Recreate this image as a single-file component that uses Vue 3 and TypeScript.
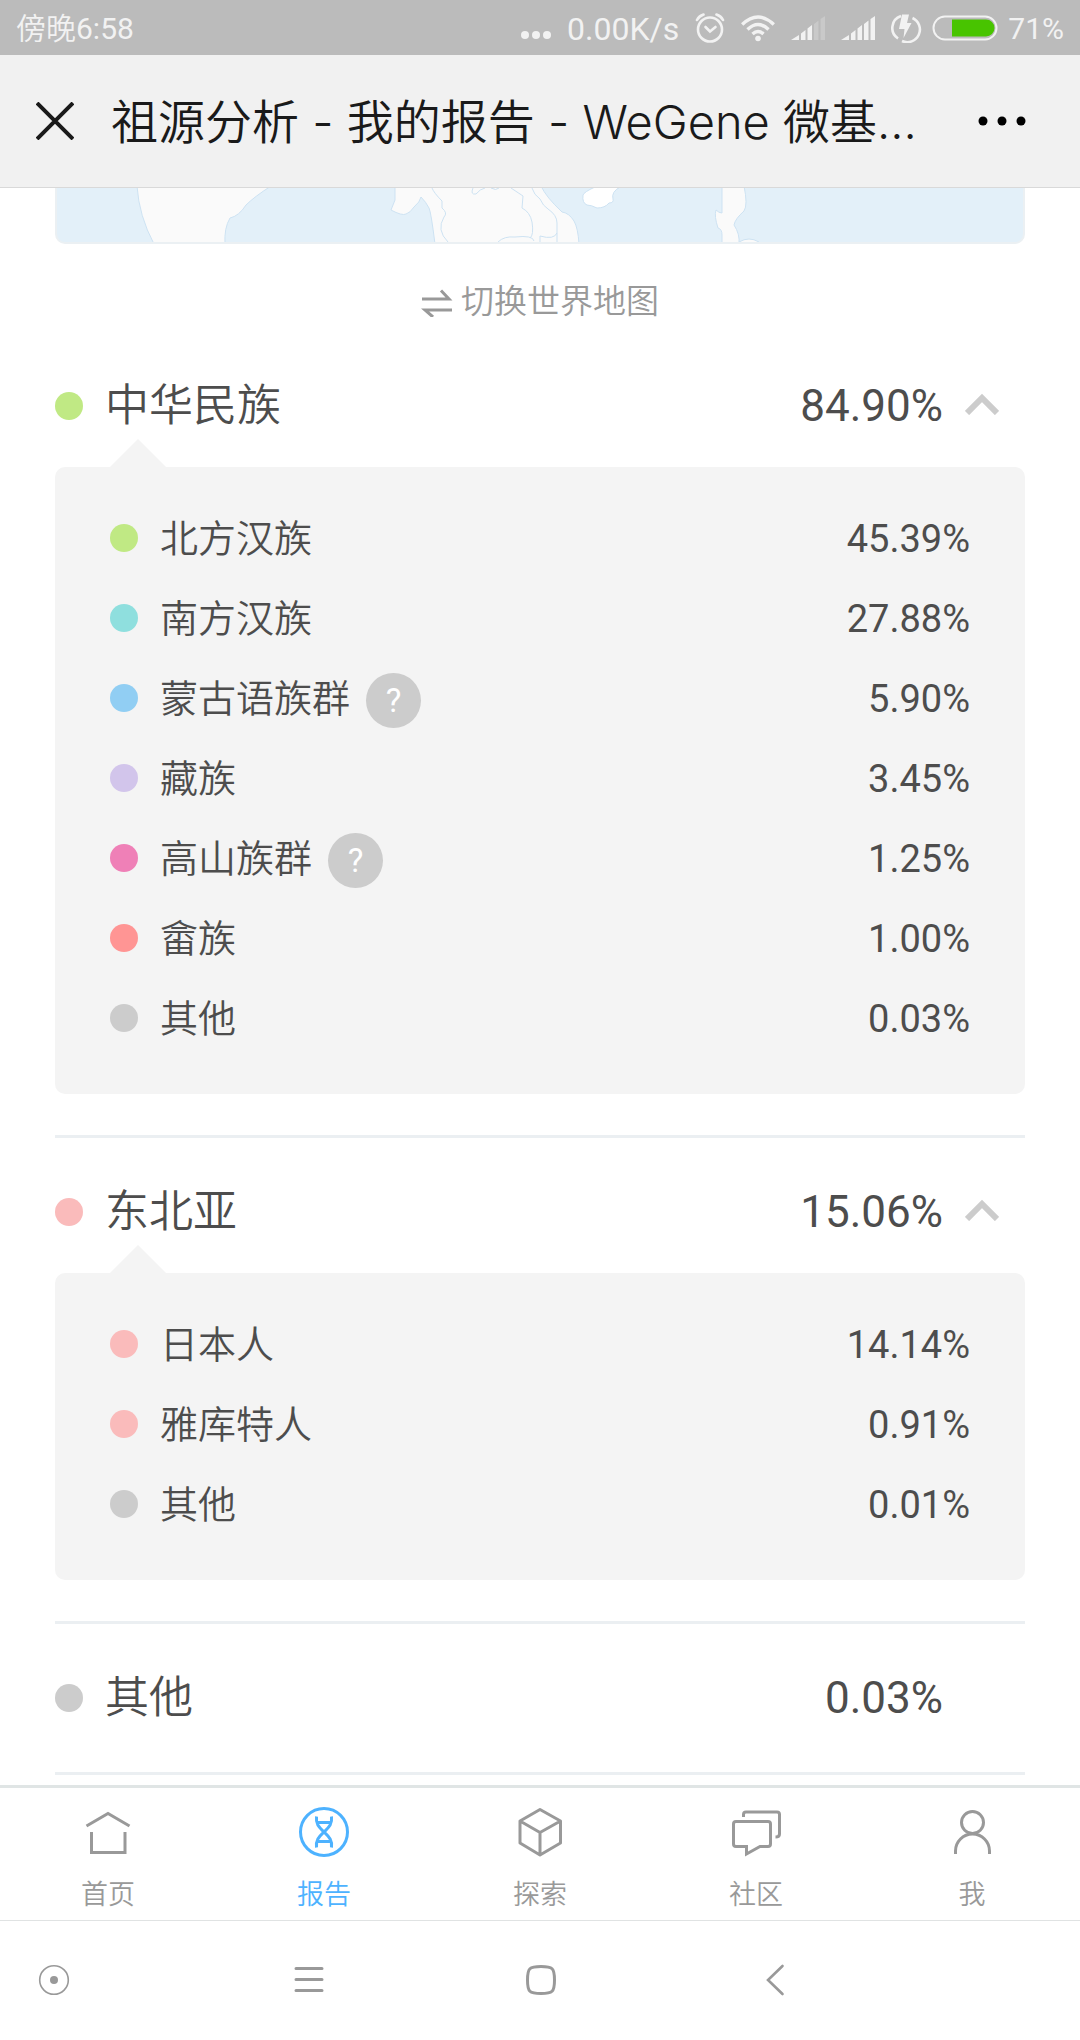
<script setup lang="ts">
import { reactive } from 'vue'

interface Ethnic {
  name: string
  percent: string
  color: string
  help?: boolean
}

interface Region {
  name: string
  percent: string
  color: string
  open: boolean
  children: Ethnic[]
}

const regions = reactive<Region[]>([
  {
    name: '中华民族',
    percent: '84.90%',
    color: '#c0e984',
    open: true,
    children: [
      { name: '北方汉族', percent: '45.39%', color: '#c0e984' },
      { name: '南方汉族', percent: '27.88%', color: '#8fdfde' },
      { name: '蒙古语族群', percent: '5.90%', color: '#91cef3', help: true },
      { name: '藏族', percent: '3.45%', color: '#d2c5eb' },
      { name: '高山族群', percent: '1.25%', color: '#ef80b7', help: true },
      { name: '畲族', percent: '1.00%', color: '#ff9594' },
      { name: '其他', percent: '0.03%', color: '#cccccc' },
    ],
  },
  {
    name: '东北亚',
    percent: '15.06%',
    color: '#fabbbb',
    open: true,
    children: [
      { name: '日本人', percent: '14.14%', color: '#fabbbb' },
      { name: '雅库特人', percent: '0.91%', color: '#fabbbb' },
      { name: '其他', percent: '0.01%', color: '#cccccc' },
    ],
  },
  { name: '其他', percent: '0.03%', color: '#cccccc', open: false, children: [] },
])

function toggle(region: Region) {
  if (region.children.length) region.open = !region.open
}
</script>

<template>
  <div class="screen">
    <div class="status">
      <span>傍晚6:58</span>
      <div class="status-icons">
        <svg width="30" height="28" viewBox="0 0 30 28" fill="#f2f2f2">
          <circle cx="4" cy="21" r="4" /><circle cx="15" cy="21" r="4" /><circle cx="26" cy="21" r="4" />
        </svg>
        <span class="speed">0.00K/s</span>
        <svg width="30" height="30" viewBox="0 0 30 30" fill="none" stroke="#f2f2f2" stroke-width="2.6" stroke-linecap="round">
          <circle cx="15" cy="16.500" r="12" />
          <path d="M10.500 14L15 18.500l5.500-4.500" />
          <path d="M2 7Q4 3 8.500 1.500M28 7Q26 3 21.500 1.500" />
        </svg>
        <svg width="34" height="28" viewBox="0 0 34 28" fill="none" stroke="#f2f2f2" stroke-width="3.400">
          <path d="M1.200 10.500Q17-4.500 32.800 10.500" />
          <path d="M6.500 15.500Q17 5.500 27.500 15.500" />
          <path d="M11.500 20Q17 15 22.500 20" />
          <circle cx="17" cy="24.500" r="2.800" fill="#f2f2f2" stroke="none" />
        </svg>
        <svg width="34" height="24" viewBox="0 0 34 24" fill="#f2f2f2">
          <path d="M0 24L8 19V24ZM10 17.500L14.500 14V24H10ZM16.500 12.500L21 9V24H16.500Z" />
          <path d="M23 8L27.500 4.500V24H23ZM29.500 3L34 0V24H29.500Z" opacity=".25" />
        </svg>
        <svg width="34" height="24" viewBox="0 0 34 24" fill="#f2f2f2">
          <path d="M0 24L8 19V24ZM10 17.500L14.500 14V24H10ZM16.500 12.500L21 9V24H16.500ZM23 8L27.500 4.500V24H23ZM29.500 3L34 0V24H29.500Z" />
        </svg>
        <div class="battery">
          <svg width="31" height="30" viewBox="0 0 31 30" fill="none" stroke="#f2f2f2" stroke-width="2.600">
            <path d="M10 3A12.600 12.600 0 0 0 7 25.500M21.500 5A12.600 12.600 0 0 1 11 28" />
            <path d="M11 1.500H18L16 10H20.500L12.500 25L13.500 16H8Z" fill="#f2f2f2" stroke="none" />
          </svg>
          <svg width="66" height="26" viewBox="0 0 66 26">
            <rect x="1.500" y="1.500" width="63" height="23" rx="11.500" fill="none" stroke="#f2f2f2" stroke-width="2" />
            <path d="M20 4.500H54A8.500 8.500 0 0 1 54 21.500H20Z" fill="#48c400" />
          </svg>
          <span>71%</span>
        </div>
      </div>
    </div>

    <header class="titlebar">
      <button type="button" aria-label="关闭">
        <svg width="38" height="38" viewBox="0 0 38 38" stroke="#1a1a1a" stroke-width="4">
          <path d="M1 1L37 37M37 1L1 37" />
        </svg>
      </button>
      <h1>祖源分析 - 我的报告 - WeGene 微基...</h1>
      <button type="button" aria-label="更多">
        <svg width="48" height="10" viewBox="0 0 48 10">
          <circle cx="5" cy="5" r="4.500" /><circle cx="24" cy="5" r="4.500" /><circle cx="43" cy="5" r="4.500" />
        </svg>
      </button>
    </header>

    <main>
      <div class="map">
        <svg viewBox="0 0 970 54" preserveAspectRatio="xMidYMax slice" stroke="#cde2f2" stroke-width="1" stroke-linejoin="round">
          <g fill="#fafafa">
            <path d="M82-2Q84 28 99 56H170Q169 40 175 30Q184 28 191 17Q199 9 216-2Z" />
            <path d="M340-2V12L336 22Q347 28 351 26Q355 25 359 19Q365 14 366 9Q371 14 374 20Q376 24 380 56H524Q523 40 519 33Q514 25 507 24Q491 9 486-2Z" />
            <path d="M667-2V25Q664 25 661 22Q659 28 663 40Q667 41 667 47V56H684Q685 46 679 37Q680 31 689 23Q693 17 689-2Z" />
            <path d="M684 54Q694 48 704 54" />
          </g>
          <path fill="#ffffff" d="M540-1Q529 4 528 7Q527 15 532 17Q536 17 542 20Q550 20 554 15Q559 15 558 11Q556 4 565-1Z" />
          <g fill="none">
            <path d="M377 0Q379 5 387 13V20Q393 25 389 29Q381 42 393 54" />
            <path d="M418 0Q415 7 421 6Q425 1 430 0M436 0Q441 3 444 0" />
            <path d="M456 0L468 8L467 20Q475 24 477 34Q479 47 475 50" />
            <path d="M477 0Q479 7 485 11Q488 18 493 21Q502 27 502 35V56" />
            <path d="M443 54Q449 48 460 49Q478 47 479 53M485 54V48Q499 52 502 45" />
          </g>
        </svg>
      </div>

      <button class="switch" type="button">
        <svg width="32" height="30" viewBox="0 0 32 30" fill="none" stroke="#999999" stroke-width="3">
          <path d="M1 12H28L20 3.500M31 23H4L12 30" />
        </svg>
        <span>切换世界地图</span>
      </button>

      <section v-for="region in regions" :key="region.name" class="region" :class="{ plain: !region.open }">
        <button class="region-head" type="button" :aria-expanded="region.open" @click="toggle(region)">
          <span class="dot" :style="{ background: region.color }"></span>
          <span class="name">{{ region.name }}</span>
          <span>{{ region.percent }}</span>
          <span class="chevron">
            <svg v-if="region.children.length" :class="{ down: !region.open }" width="34" height="22" viewBox="0 0 34 22" fill="none" stroke="#cccccc" stroke-width="6">
              <path d="M2 20L17 5L32 20" />
            </svg>
          </span>
        </button>
        <ul v-if="region.open" class="panel">
          <li v-for="item in region.children" :key="item.name">
            <span class="dot" :style="{ background: item.color }"></span>
            <span class="name">{{ item.name }}</span>
            <button v-if="item.help" class="help" type="button" :aria-label="item.name + '说明'">?</button>
            <span class="value">{{ item.percent }}</span>
          </li>
        </ul>
      </section>
    </main>

    <nav class="tabs">
      <a href="#home">
        <svg width="52" height="52" viewBox="0 0 52 52">
          <path d="M4.500 20L26 7.500L47.500 20M9.500 26V46.500H43V26" />
        </svg>
        <span>首页</span>
      </a>
      <a href="#report" class="active" aria-current="page">
        <svg width="52" height="52" viewBox="0 0 52 52">
          <circle cx="26" cy="26" r="23.500" />
          <path d="M18.500 10.500C17.500 19 22 22 26 26C30 30 34.500 33 33.500 41.500M33.500 10.500C34.500 19 30 22 26 26C22 30 17.500 33 18.500 41.500M20 16.500H32M20 35.500H32" />
        </svg>
        <span>报告</span>
      </a>
      <a href="#explore">
        <svg width="52" height="52" viewBox="0 0 52 52" stroke-linejoin="round">
          <path d="M26 3.500L46.500 15V37L26 49L6 37V15ZM6 15L26 26.500L46.500 15M26 26.500V49" />
        </svg>
        <span>探索</span>
      </a>
      <a href="#community">
        <svg width="52" height="52" viewBox="0 0 52 52">
          <path d="M6 15.500H38Q40.500 15.500 40.500 18V38Q40.500 40.500 38 40.500H30L16.500 48V40.500H6Q3.500 40.500 3.500 38V18Q3.500 15.500 6 15.500Z" />
          <path d="M13.500 11V8.500Q13.500 6 16 6H47Q49.500 6 49.500 8.500V28Q49.500 31 45.500 31" />
        </svg>
        <span>社区</span>
      </a>
      <a href="#me">
        <svg width="52" height="52" viewBox="0 0 52 52">
          <circle cx="26.500" cy="16.500" r="11" />
          <path d="M9.500 48V45A17 17 0 0 1 43.500 45V48" />
        </svg>
        <span>我</span>
      </a>
    </nav>

    <div class="system-nav">
      <button type="button" aria-label="悬浮球">
        <svg width="32" height="32" viewBox="0 0 32 32" fill="none" stroke="#999999">
          <circle cx="16" cy="16" r="14.300" stroke-width="1.600" />
          <circle cx="16" cy="16" r="4" fill="#999999" stroke="none" />
        </svg>
      </button>
      <button type="button" aria-label="菜单">
        <svg width="32" height="32" viewBox="0 0 32 32" fill="none" stroke="#999999" stroke-width="3" stroke-linecap="round">
          <path d="M3 4.500H29M3 15.500H29M3 26.500H29" />
        </svg>
      </button>
      <button type="button" aria-label="主屏幕">
        <svg width="32" height="32" viewBox="0 0 32 32" fill="none" stroke="#999999" stroke-width="3">
          <path d="M16 2.500C27.500 2.500 29.500 4 29.500 16S27.500 29.500 16 29.500S2.500 28 2.500 16S4.500 2.500 16 2.500Z" />
        </svg>
      </button>
      <button type="button" aria-label="返回">
        <svg width="32" height="32" viewBox="0 0 32 32" fill="none" stroke="#999999" stroke-width="2.600" stroke-linecap="round">
          <path d="M23.500 2L9 16L23.500 30" />
        </svg>
      </button>
    </div>
  </div>
</template>

<style>
body {
  margin: 0;
  background: #ffffff;
}
</style>

<style scoped>
.screen {
  display: flex;
  flex-direction: column;
  min-height: 100vh;
  color: #4d4d4d;
  font-family: Roboto, "Noto Sans CJK SC DemiLight", "Noto Sans CJK SC", sans-serif;
}

button {
  margin: 0;
  padding: 0;
  border: 0;
  background: none;
  color: inherit;
  font: inherit;
  cursor: pointer;
}

svg {
  display: block;
  flex: none;
}

.status {
  display: flex;
  align-items: center;
  justify-content: space-between;
  height: 55px;
  padding: 0 16px;
  background: #bbbbbb;
  color: #f2f2f2;
  font-size: 30px;
  line-height: 56px;
}

.status span {
  padding-top: 2px;
}

.status .speed {
  font-size: 32px;
}

.status-icons {
  display: flex;
  align-items: center;
  gap: 16px;
}

.battery {
  display: flex;
  align-items: center;
  gap: 10px;
}

.titlebar {
  display: flex;
  align-items: center;
  height: 132px;
  padding: 0 54px 0 36px;
  border-bottom: 1px solid #d9d9d9;
  background: #f1f1f1;
  color: #1a1a1a;
}

.titlebar h1 {
  flex: 1;
  margin: 0 0 0 37px;
  padding-top: 2px;
  overflow: hidden;
  font-family: Inter, "Noto Sans CJK SC DemiLight", "Noto Sans CJK SC", sans-serif;
  font-size: 47px;
  font-weight: 350;
  line-height: 64px;
  white-space: nowrap;
}

main {
  flex: 1;
  padding: 0 55px;
}

.map {
  overflow: hidden;
  border: 2px solid #ebf0f3;
  border-top: 0;
  border-radius: 0 0 10px 10px;
  background: #e3f0f9;
}

.map svg {
  width: 100%;
  height: 54px;
}

.switch {
  display: flex;
  align-items: center;
  gap: 8px;
  margin: 28px auto 0;
  color: #999999;
  font-size: 33px;
  font-weight: 350;
  line-height: 60px;
}

.region + .region {
  border-top: 3px solid #ebeff2;
}

.region {
  padding: 13px 0 41px;
}

.region.plain {
  padding-bottom: 13px;
}

.region:last-child {
  border-bottom: 3px solid #ebeff2;
}

.region-head {
  display: flex;
  align-items: center;
  width: 100%;
  height: 122px;
  padding-right: 26px;
  font-size: 44px;
  line-height: 60px;
  text-align: left;
}

.dot {
  flex: none;
  width: 28px;
  height: 28px;
  border-radius: 50%;
}

.name {
  margin-left: 22px;
  font-weight: 350;
}

.region-head .name {
  flex: 1;
}

.chevron {
  width: 34px;
  margin-left: 22px;
  padding-bottom: 4px;
}

.down {
  transform: rotate(180deg);
}

.panel {
  position: relative;
  margin: 0;
  padding: 31px 55px 36px;
  border-radius: 10px;
  background: #f4f4f4;
  font-size: 38px;
  line-height: 62px;
  list-style: none;
}

.panel::before {
  position: absolute;
  bottom: 100%;
  left: 55px;
  border: 28px solid transparent;
  border-top: 0;
  border-bottom-color: #f4f4f4;
  content: "";
}

.panel li {
  display: flex;
  align-items: center;
  height: 80px;
}

.panel .name,
.value {
  padding-top: 2px;
}

.help {
  width: 55px;
  height: 55px;
  margin: 4px 0 0 16px;
  border-radius: 50%;
  background: #cccccc;
  color: #ffffff;
  font-size: 33px;
  line-height: 55px;
}

.value {
  margin-left: auto;
}

.tabs {
  display: grid;
  grid-template-columns: repeat(5, 1fr);
  height: 132px;
  border-top: 3px solid #e0e5e5;
}

.tabs a {
  display: flex;
  flex-direction: column;
  align-items: center;
  gap: 17px;
  padding-top: 18px;
  color: #999999;
  font-size: 27px;
  font-weight: 350;
  line-height: 40px;
  text-decoration: none;
}

.tabs svg {
  fill: none;
  stroke: currentColor;
  stroke-width: 3;
}

.tabs .active {
  color: #4db2ff;
}

.system-nav {
  display: grid;
  grid-template-columns: 108fr 85fr 232fr 232fr 236fr 187fr;
  height: 117px;
  padding-bottom: 2px;
  border-top: 1px solid #e0e3e3;
}

.system-nav button {
  display: flex;
  align-items: center;
  justify-content: center;
}

.system-nav button:nth-child(2) {
  grid-column: 3;
}
</style>
